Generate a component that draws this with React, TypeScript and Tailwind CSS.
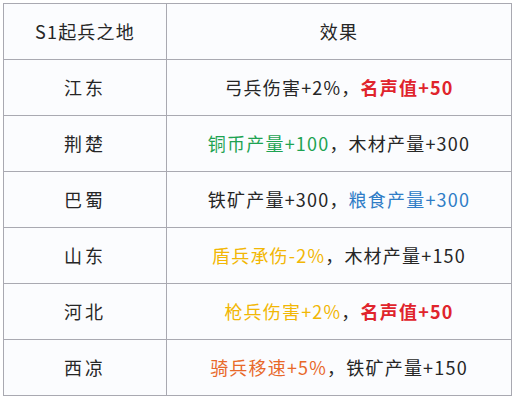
import React from "react";

type Part = { text: string; color?: string };

const rows: { place: string; effect: Part[] }[] = [
  {
    place: "江东",
    effect: [{ text: "弓兵伤害+2%，" }, { text: "名声值+50", color: "text-[#e0242c] font-bold" }],
  },
  {
    place: "荆楚",
    effect: [{ text: "铜币产量+100", color: "text-[#1ea352]" }, { text: "，木材产量+300" }],
  },
  {
    place: "巴蜀",
    effect: [{ text: "铁矿产量+300，" }, { text: "粮食产量+300", color: "text-[#2f7cc6]" }],
  },
  {
    place: "山东",
    effect: [{ text: "盾兵承伤-2%", color: "text-[#f2b705]" }, { text: "，木材产量+150" }],
  },
  {
    place: "河北",
    effect: [
      { text: "枪兵伤害+2%", color: "text-[#f2b705]" },
      { text: "，" },
      { text: "名声值+50", color: "text-[#e0242c] font-bold" },
    ],
  },
  {
    place: "西凉",
    effect: [{ text: "骑兵移速+5%", color: "text-[#e8692a]" }, { text: "，铁矿产量+150" }],
  },
];

export default function App() {
  return (
    <div
      className="w-[517px] h-[400px] bg-white pt-[3px] pl-[3px]"
      style={{ fontFamily: '"Noto Sans CJK SC", "Noto Sans", sans-serif' }}
    >
      <table className="w-[509px] border-collapse bg-[#fbfcfe] text-[18px] text-[#262626] tracking-[1.2px]">
        <tbody>
          <tr className="h-[56px]">
            <td className="w-[163px] border border-[#a9a9b1] text-center">S1起兵之地</td>
            <td className="border border-[#a9a9b1] text-center">效果</td>
          </tr>
          {rows.map((row) => (
            <tr key={row.place} className="h-[56px]">
              <td className="border border-[#a9a9b1] text-center tracking-[3px]">{row.place}</td>
              <td className="border border-[#a9a9b1] text-center">
                {row.effect.map((p, i) => (
                  <span key={i} className={p.color}>
                    {p.text}
                  </span>
                ))}
              </td>
            </tr>
          ))}
        </tbody>
      </table>
    </div>
  );
}
